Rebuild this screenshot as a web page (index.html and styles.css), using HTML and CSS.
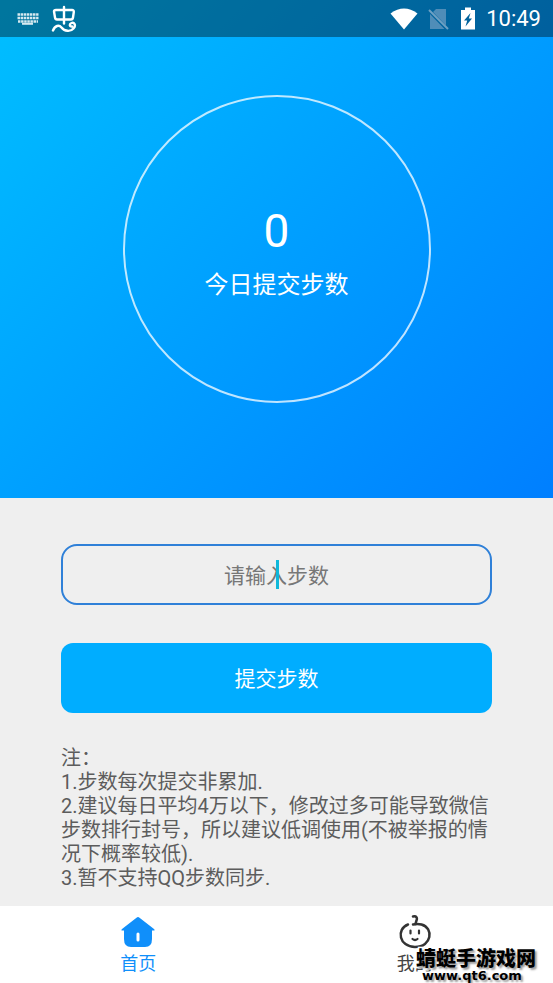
FILE: index.html
```
<!DOCTYPE html>
<html lang="zh-CN">
<head>
<meta charset="utf-8">
<meta name="viewport" content="width=device-width, initial-scale=1">
<title>首页</title>
<link rel="stylesheet" href="styles.css">
</head>
<body>
<div class="app">
  <header class="hero">
    <div class="status">
      <div class="status-group">
        <svg width="22" height="12" viewBox="0 0 22 12" aria-hidden="true">
          <g fill="none" stroke="#d5e9f0" stroke-width="2.4">
            <path d="M0.500 1.500H21.500M0.500 5H21.500M1 8.500H21" stroke-dasharray="2.5 0.6"/>
            <path d="M5 10.800H16" stroke-width="2"/>
          </g>
        </svg>
        <svg width="26" height="28" viewBox="0 0 26 28" fill="none" stroke="#fff" stroke-width="2.4" stroke-linecap="round" stroke-linejoin="round" aria-hidden="true">
          <path d="M3 6.500Q3 5 5 5H21Q23 5 22.800 7L22 12.500Q21.700 14.500 20 14.500H6Q4.300 14.500 4 12.500Z"/>
          <path d="M13 2V18.500"/>
          <path d="M2 25.500C4 20.500 8 19.500 10.500 22.500C13.500 26.500 19.500 27 22.500 23.500C25.500 20 23 17 20.500 18C18 19 18.500 22 21 21.500"/>
        </svg>
      </div>
      <div class="status-group status-right">
        <svg width="28" height="22" viewBox="0 0 28 22" aria-hidden="true"><path d="M0.500 5.500Q14-4.500 27.500 5.500L14 21.500Z" fill="#fff"/></svg>
        <svg width="22" height="22" viewBox="0 0 22 22" aria-hidden="true">
          <path d="M8 1H18V17.500L5 4ZM2 6L16.500 21H2Z" fill="#4f8db8"/>
          <path d="M1 2L20 21" stroke="#6ea0c3" stroke-width="2"/>
        </svg>
        <svg width="16" height="23" viewBox="0 0 16 23" aria-hidden="true">
          <path d="M1 3H5V0.500H11V3H15V22.500H1Z" fill="#fff"/>
          <path d="M10.500 6L4 13.500H7.200L5.500 19.500L12 11.500H8.800Z" fill="#00629c"/>
        </svg>
        <span class="clock">10:49</span>
      </div>
    </div>
    <div class="ring">
      <span class="count">0</span>
      <span class="caption">今日提交步数</span>
    </div>
  </header>

  <main class="content">
    <div class="field">
      <input class="steps" type="text" inputmode="numeric" placeholder="请输入步数" aria-label="请输入步数">
      <span class="caret"></span>
    </div>
    <button class="submit" type="button">提交步数</button>
    <section class="notes">
      <p>注：</p>
      <p>1.步数每次提交非累加.</p>
      <p>2.建议每日平均4万以下，修改过多可能导致微信步数排行封号，所以建议低调使用(不被举报的情况下概率较低).</p>
      <p>3.暂不支持QQ步数同步.</p>
    </section>
  </main>

  <nav class="tabs">
    <a class="tab active" href="#home">
      <svg width="36" height="34" viewBox="0 0 36 34" aria-hidden="true">
        <path d="M16.500 2.700Q18 1.500 19.500 2.700L34 14Q35.500 15.500 33.500 15.500H32V24Q32 32 25 32H11Q4 32 4 24V15.500H2.500Q0.500 15.500 2 14Z" fill="#108ffa"/>
        <path d="M18 19V25" stroke="#fff" stroke-width="3" stroke-linecap="round"/>
      </svg>
      <span>首页</span>
    </a>
    <a class="tab" href="#mine">
      <svg width="36" height="34" viewBox="0 0 36 34" fill="none" stroke="#333" stroke-width="2.500" stroke-linecap="round" aria-hidden="true">
        <path d="M11 9.500C-1 14 2 32 18 32C35 32 37 13 24.500 9.500C21.500 8.700 18 9 16 9.500"/>
        <path d="M16 1.500C19.500 0.500 20.500 3 19.500 5.500C19 7 18.500 8 18.500 9"/>
        <path d="M13.500 15.500V18.500M22 15.500V18.500M15.500 24Q18 26 20.500 24" stroke-width="2.200"/>
      </svg>
      <span>我的</span>
    </a>
  </nav>
  <div class="watermark">
    <span class="mark-name">蜻蜓手游戏网</span>
    <span class="mark-url">www.qt6.com</span>
  </div>
</div>
</body>
</html>
```
FILE: styles.css
```
* {
  box-sizing: border-box;
}

body {
  margin: 0;
  background: #efefef;
  color: #5c5c5c;
  font-family: Roboto, "Noto Sans CJK SC", sans-serif;
}

.app {
  position: relative;
  display: flex;
  flex-direction: column;
  min-height: 100vh;
}

.hero {
  display: flex;
  flex-direction: column;
  align-items: center;
  padding-bottom: 95px;
  background: linear-gradient(135deg, #00bfff, #007fff);
  color: #fff;
}

.status {
  display: flex;
  align-items: center;
  justify-content: space-between;
  align-self: stretch;
  height: 37px;
  padding: 0 12px 0 17px;
  background: rgba(0, 0, 0, 0.38);
}

.status-group {
  display: flex;
  align-items: center;
  gap: 12px;
}

.status-right {
  gap: 10px;
}

.clock {
  font-size: 22px;
  line-height: 38px;
}

.ring {
  display: flex;
  flex-direction: column;
  align-items: center;
  width: 308px;
  aspect-ratio: 1;
  margin-top: 58px;
  padding-top: 104px;
  border: 2px solid rgba(255, 255, 255, 0.75);
  border-radius: 50%;
}

.count {
  font-size: 46px;
  line-height: 60px;
}

.caption {
  font-size: 24px;
  line-height: 48px;
}

.content {
  flex: 1;
  padding: 46px 61px 15px;
}

.field {
  position: relative;
}

.steps {
  display: block;
  width: 100%;
  height: 61px;
  padding: 2px 0 0;
  border: 2px solid #2f80d8;
  border-radius: 16px;
  outline: none;
  background: transparent;
  color: #333;
  font: 21px/32px Roboto, "Noto Sans CJK SC", sans-serif;
  text-align: center;
}

.steps::placeholder {
  color: #777;
  opacity: 1;
}

.caret {
  position: absolute;
  top: 16px;
  left: 50%;
  width: 3px;
  height: 29px;
  margin-left: -1px;
  background: #10b8da;
}

.submit {
  display: block;
  width: 100%;
  height: 70px;
  margin-top: 38px;
  padding: 2px 0 0;
  border: 0;
  border-radius: 12px;
  background: #00adff;
  color: #fff;
  font: 21px/32px Roboto, "Noto Sans CJK SC", sans-serif;
}

.notes {
  margin-top: 33px;
  margin-right: -4px;
  font-size: 20px;
  line-height: 24px;
}

.notes p {
  margin: 0;
}

.tabs {
  display: flex;
  height: 77px;
  background: #fff;
}

.tab {
  display: flex;
  flex: 1;
  flex-direction: column;
  align-items: center;
  padding-top: 9px;
  color: #444;
  font-size: 18px;
  line-height: 30px;
  text-decoration: none;
}

.active {
  color: #108ffa;
}

.watermark {
  position: absolute;
  right: 17px;
  bottom: 0;
  display: flex;
  flex-direction: column;
  color: #000;
  font-weight: 900;
  text-shadow: 2px 2px 2px #999;
  -webkit-text-stroke: 3px #fff;
  paint-order: stroke fill;
}

.mark-name {
  font-family: "Noto Sans CJK SC", sans-serif;
  font-size: 20px;
  line-height: 20px;
}

.mark-url {
  padding-left: 6px;
  font-family: "DejaVu Sans", sans-serif;
  font-size: 13px;
  line-height: 15px;
}
```
